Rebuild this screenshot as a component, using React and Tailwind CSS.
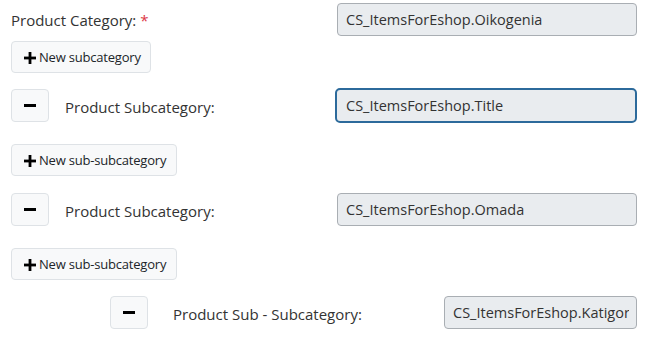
import React from "react";

const font = { fontFamily: '"Open Sans", "Noto Sans", sans-serif' };

function Plus() {
  return (
    <svg width="12" height="12" viewBox="0 0 12 12" className="shrink-0">
      <rect x="4.6" y="0" width="2.8" height="12" fill="#000" />
      <rect x="0" y="4.6" width="12" height="2.8" fill="#000" />
    </svg>
  );
}

function AddButton({ children, w, mt }) {
  return (
    <div
      className={`flex items-center gap-[3px] pl-[12px] pt-[1px] h-[32px] rounded-[4px] border border-[#dee2e6] bg-[#f8f9fa] text-[13px] text-[#212529] ${w} ${mt}`}
    >
      <Plus />
      <span className="tracking-[-0.2px]">{children}</span>
    </div>
  );
}

function Minus() {
  return (
    <div className="flex items-center justify-center w-[38px] h-[33px] rounded-[4px] border border-[#dee2e6] bg-[#f8f9fa] shrink-0">
      <div className="w-[12px] h-[3px] bg-black" />
    </div>
  );
}

function Field({ value, w, focused }) {
  return (
    <div
      className={
        focused
          ? `flex items-center ${w} h-[35px] pl-[9px] pr-[7px] pt-[1px] rounded-[5px] border-2 border-[#2c6a9b] bg-[#e9ecef] text-[14.5px] text-[#333]`
          : `flex items-center ${w} h-[33px] pl-[8px] pr-[7px] pt-[1px] rounded-[4px] border border-[#a9aeb3] bg-[#e9ecef] text-[14.5px] text-[#333]`
      }
    >
      <span className="block flex-1 overflow-hidden whitespace-nowrap">{value}</span>
    </div>
  );
}

export default function App() {
  return (
    <div className="w-[653px] h-[340px] bg-white overflow-hidden" style={font}>
      <div className="flex flex-col w-[637px] pl-[11px]">
        <div className="flex items-center mt-[3px] h-[33px]">
          <span className="text-[15px] text-[#333] pt-[2px]">
            Product Category: <span className="text-[#dc3545]">*</span>
          </span>
          <div className="ml-auto">
            <Field value="CS_ItemsForEshop.Oikogenia" w="w-[300px]" />
          </div>
        </div>
        <AddButton w="w-[140px]" mt="mt-[5px]">New subcategory</AddButton>

        <div className="flex items-center mt-[15px] h-[35px]">
          <Minus />
          <span className="ml-[16px] text-[15px] text-[#333] pt-[4px]">Product Subcategory:</span>
          <div className="ml-auto">
            <Field value="CS_ItemsForEshop.Title" w="w-[302px]" focused />
          </div>
        </div>
        <AddButton w="w-[166px]" mt="mt-[21px]">New sub-subcategory</AddButton>

        <div className="flex items-center mt-[16px] h-[34px]">
          <Minus />
          <span className="ml-[16px] text-[15px] text-[#333] pt-[4px]">Product Subcategory:</span>
          <div className="ml-auto">
            <Field value="CS_ItemsForEshop.Omada" w="w-[300px]" />
          </div>
        </div>
        <AddButton w="w-[166px]" mt="mt-[22px]">New sub-subcategory</AddButton>

        <div className="flex items-center mt-[16px] h-[33px] pl-[99px]">
          <Minus />
          <span className="ml-[25px] text-[15px] text-[#333] pt-[4px]">Product Sub - Subcategory:</span>
          <div className="ml-auto">
            <Field value="CS_ItemsForEshop.Katigoria" w="w-[193px]" />
          </div>
        </div>
      </div>
    </div>
  );
}
